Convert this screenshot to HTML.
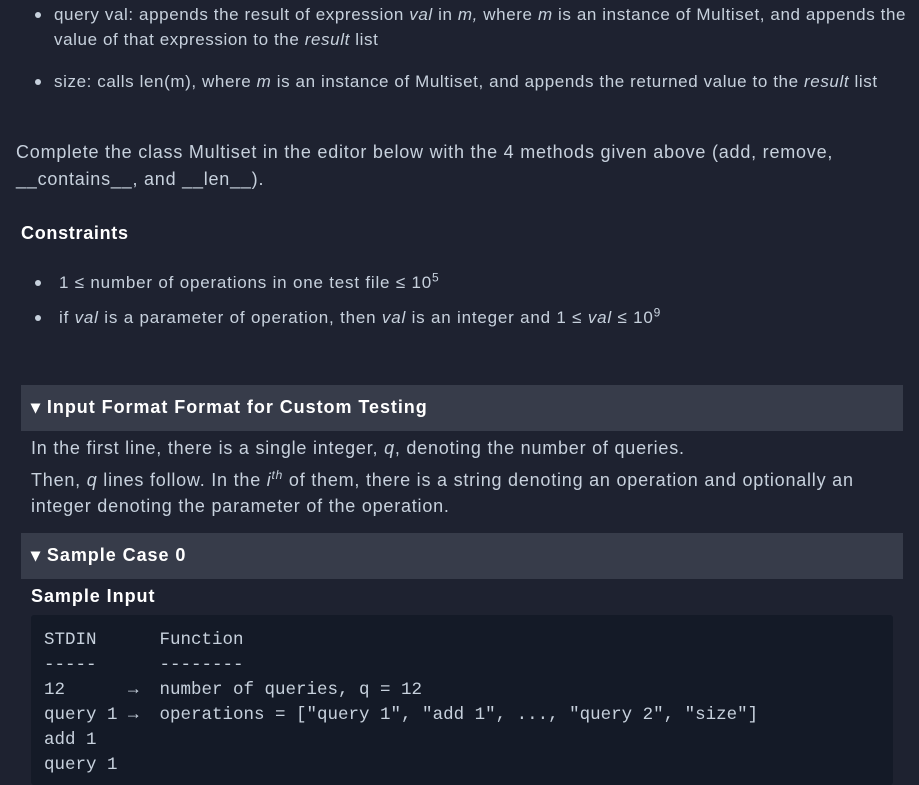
<!DOCTYPE html>
<html><head><meta charset="utf-8"><style>
body{margin:0;width:919px;height:776px;overflow:hidden;background:#1e2230;color:#c7d1dd;font-family:"Liberation Sans",sans-serif;font-size:17px;letter-spacing:0.6px}
.a{position:absolute;white-space:nowrap;line-height:25px}
.l{font-size:18px;letter-spacing:0.78px}
.b{position:absolute;width:6px;height:6px;border-radius:50%;background:#c7d1dd}
i{font-style:italic}
.h{font-weight:bold;color:#fff;letter-spacing:0.95px}
.box{position:absolute;background:#373c4a}
.code{position:absolute;left:31px;top:615px;width:862px;height:170px;background:#141a27;border-radius:3px}
.m{position:absolute;font-family:"Liberation Mono",monospace;font-size:17.5px;letter-spacing:0;white-space:pre;line-height:25px;color:#c7d1dd}
sup{font-size:12px;line-height:0}
</style></head><body>
<div class="b" style="left:35px;top:12px"></div>
<div class="a" style="left:54px;top:2px">query val: appends the result of expression <i>val</i> in <i>m,</i> where <i>m</i> is an instance of Multiset, and appends the</div>
<div class="a" style="left:54px;top:27px">value of that expression to the <i>result</i> list</div>
<div class="b" style="left:35px;top:79px"></div>
<div class="a" style="left:54px;top:69px">size: calls len(m), where <i>m</i> is an instance of Multiset, and appends the returned value to the <i>result</i> list</div>
<div class="a l" style="left:16px;top:140px">Complete the class Multiset in the editor below with the 4 methods given above (add, remove,</div>
<div class="a l" style="left:16px;top:167px">__contains__, and __len__).</div>
<div class="a h" style="left:21px;top:221px;font-size:18px;letter-spacing:0.7px">Constraints</div>
<div class="b" style="left:35px;top:280px"></div>
<div class="a" style="left:59px;top:270px;letter-spacing:0.8px">1 ≤ number of operations in one test file ≤ 10<sup>5</sup></div>
<div class="b" style="left:35px;top:315px"></div>
<div class="a" style="left:59px;top:305px;letter-spacing:0.8px">if <i>val</i> is a parameter of operation, then <i>val</i> is an integer and 1 ≤ <i>val</i> ≤ 10<sup>9</sup></div>
<div class="box" style="left:21px;top:385px;width:882px;height:46px"></div>
<div class="a h" style="left:31px;top:395px;font-size:18px">▾ Input Format Format for Custom Testing</div>
<div class="a l" style="left:31px;top:436px">In the first line, there is a single integer, <i>q</i>, denoting the number of queries.</div>
<div class="a l" style="left:31px;top:468px">Then, <i>q</i> lines follow. In the <i>i<sup>th</sup></i> of them, there is a string denoting an operation and optionally an</div>
<div class="a l" style="left:31px;top:494px">integer denoting the parameter of the operation.</div>
<div class="box" style="left:21px;top:533px;width:882px;height:46px"></div>
<div class="a h" style="left:31px;top:543px;font-size:18px">▾ Sample Case 0</div>
<div class="a h" style="left:31px;top:584px;font-size:18px">Sample Input</div>
<div class="code"></div>
<div class="m" style="left:44px;top:628px">STDIN      Function
-----      --------
12      →  number of queries, q = 12
query 1 →  operations = ["query 1", "add 1", ..., "query 2", "size"]
add 1
query 1</div>
</body></html>
